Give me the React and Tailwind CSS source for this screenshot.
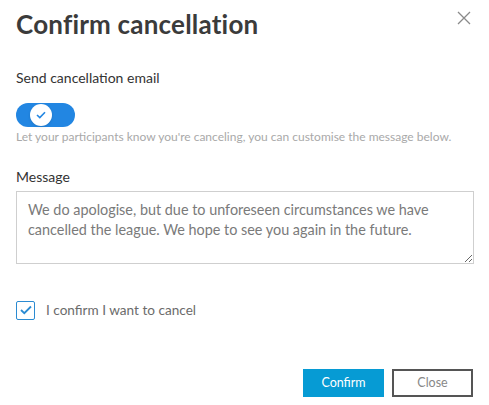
import { useState } from "react";

const font = { fontFamily: "Lato, 'Open Sans', sans-serif" };

const App = () => {
	const [sendEmail, setSendEmail] = useState(true);
	const [confirmed, setConfirmed] = useState(true);
	const [message, setMessage] = useState(
		"We do apologise, but due to unforeseen circumstances we have cancelled the league. We hope to see you again in the future."
	);

	return (
		<div className="w-[489px] h-[405px] bg-white relative px-4 pt-[6px]" style={font}>
			<div className="flex items-start justify-between">
				<h1 className="text-[26px] font-bold text-[#3b3b3b] tracking-[0.2px] leading-[36px]">Confirm cancellation</h1>
				<button className="mt-[5px] mr-[2px] text-[#8a8a8a]" aria-label="Close">
					<svg width="14" height="14" viewBox="0 0 14 14" fill="none" stroke="currentColor" strokeWidth="1.3">
						<path d="M1 1L13 13M13 1L1 13" />
					</svg>
				</button>
			</div>

			<p className="mt-[26px] text-[14px] text-[#333] leading-5">Send cancellation email</p>
			<button
				onClick={() => setSendEmail(!sendEmail)}
				className="mt-[15px] w-[59px] h-[24px] rounded-full bg-[#2286e2] flex items-center pl-[14px]"
			>
				<span className="w-[22px] h-[22px] rounded-full bg-white flex items-center justify-center shadow-sm">
					{sendEmail && (
						<svg width="10" height="8" viewBox="0 0 10 8" fill="none" stroke="#2286e2" strokeWidth="1.6">
							<path d="M1 4L3.8 6.6L9 1.2" />
						</svg>
					)}
				</span>
			</button>
			<p className="mt-[2px] text-[12px] text-[#a9a9a9] leading-4">
				Let your participants know you're canceling, you can customise the message below.
			</p>

			<p className="mt-[22px] text-[14px] text-[#333] leading-5">Message</p>
			<textarea
				value={message}
				onChange={(e) => setMessage(e.target.value)}
				className="mt-[4px] block w-[458px] h-[73px] border border-[#cfcfcf] px-[11px] py-[8px] text-[14.4px] leading-5 text-[#7a7a7a] outline-none resize-y"
			/>

			<label className="mt-[36px] flex items-center gap-[11px] cursor-pointer">
				<input type="checkbox" checked={confirmed} onChange={() => setConfirmed(!confirmed)} className="hidden" />
				<span className="w-[19px] h-[19px] border border-[#2b8bd2] rounded-[2px] flex items-center justify-center">
					{confirmed && (
						<svg width="12" height="10" viewBox="0 0 12 10" fill="none" stroke="#2b8bd2" strokeWidth="1.8">
							<path d="M1 5L4.3 8.2L11 1.5" />
						</svg>
					)}
				</span>
				<span className="text-[13.6px] text-[#6b6b6b]">I confirm I want to cancel</span>
			</label>

			<div className="mt-[49px] flex justify-end gap-2">
				<button className="w-[81px] h-[28px] bg-[#069bd4] text-white text-[12.5px]">Confirm</button>
				<button className="w-[81px] h-[28px] border-2 border-[#555] text-[#888] text-[12.5px]">Close</button>
			</div>
		</div>
	);
};

export default App;
